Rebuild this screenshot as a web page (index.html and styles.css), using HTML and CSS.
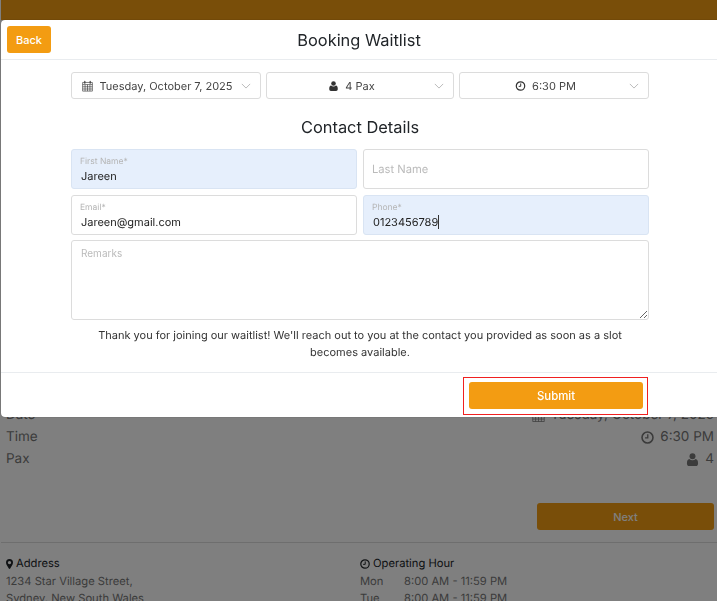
FILE: index.html
```html
<!DOCTYPE html>
<html lang="en">
<head>
  <meta charset="UTF-8">
  <title>Booking Waitlist</title>
  <link rel="stylesheet" href="styles.css">
</head>
<body>

<svg class="icon-defs" width="0" height="0">
  <symbol id="i-calendar" viewBox="0 0 14 14">
    <path fill="none" stroke="currentColor" stroke-width=".8" d="M.8 2.500h12.400v11H.8zM.8 5.200h12.400M.8 8h12.400M.8 10.800h12.400M3.900 5.200v8.300M7 5.200v8.300M10.100 5.200v8.300"/>
    <path fill="none" stroke="currentColor" stroke-width="1.400" stroke-linecap="round" d="M3.600 1v2.400M10.400 1v2.400"/>
  </symbol>
  <symbol id="i-user" viewBox="0 0 12 14">
    <circle cx="6" cy="3.600" r="3.200" fill="currentColor"/>
    <path fill="currentColor" d="M2.600 6.400c1 .9 2.100 1.300 3.400 1.300s2.400-.4 3.400-1.300c1.700.2 2.600 1.800 2.600 4.800 0 1.700-1 2.800-2.400 2.800H2.400C1 14 0 12.900 0 11.200c0-3 .9-4.600 2.600-4.800z"/>
  </symbol>
  <symbol id="i-clock" viewBox="0 0 14 14">
    <circle cx="7" cy="7" r="5.900" fill="none" stroke="currentColor" stroke-width="1.700"/>
    <path fill="none" stroke="currentColor" stroke-width="1.400" d="M7.300 3.400v4.100H4.400"/>
  </symbol>
  <symbol id="i-marker" viewBox="0 0 10 14">
    <path fill="currentColor" fill-rule="evenodd" d="M5 0a5 5 0 0 1 5 5c0 1.200-.3 1.900-.8 2.900L6 13.300c-.4.900-1.600.9-2 0L.8 7.900C.3 6.900 0 6.200 0 5a5 5 0 0 1 5-5zm0 2.600a2.400 2.400 0 1 0 0 4.800 2.400 2.400 0 0 0 0-4.800z"/>
  </symbol>
  <symbol id="i-chevron" viewBox="0 0 12 7">
    <path fill="none" stroke="currentColor" stroke-width="1.200" d="M1 1l5 5 5-5"/>
  </symbol>
</svg>

<div class="page">
  <div class="top-bar"></div>

  <div class="summary">
    <div class="summary-row">
      <span>Date</span>
      <span class="summary-value"><svg class="icon"><use href="#i-calendar"/></svg> Tuesday, October 7, 2025</span>
    </div>
    <div class="summary-row">
      <span>Time</span>
      <span class="summary-value"><svg class="icon"><use href="#i-clock"/></svg> 6:30 PM</span>
    </div>
    <div class="summary-row">
      <span>Pax</span>
      <span class="summary-value"><svg class="icon"><use href="#i-user"/></svg> 4</span>
    </div>
  </div>

  <div class="next-row">
    <button class="btn btn-next">Next</button>
  </div>

  <div class="info">
    <div class="info-col">
      <div class="info-title"><svg class="icon-sm icon-marker"><use href="#i-marker"/></svg> Address</div>
      <div>1234 Star Village Street,</div>
      <div>Sydney, New South Wales</div>
    </div>
    <div class="info-col">
      <div class="info-title"><svg class="icon-sm"><use href="#i-clock"/></svg> Operating Hour</div>
      <div class="hours"><span>Mon</span><span>8:00 AM - 11:59 PM</span></div>
      <div class="hours"><span>Tue</span><span>8:00 AM - 11:59 PM</span></div>
    </div>
  </div>
</div>

<div class="overlay">
  <div class="modal">
    <div class="modal-header">
      <button class="btn btn-back">Back</button>
      <h3>Booking Waitlist</h3>
    </div>

    <div class="modal-body">
      <div class="pickers">
        <div class="picker">
          <span class="picker-label"><svg class="icon-picker"><use href="#i-calendar"/></svg> Tuesday, October 7, 2025</span>
          <svg class="chevron"><use href="#i-chevron"/></svg>
        </div>
        <div class="picker">
          <span class="picker-label"><svg class="icon-picker icon-picker-sm"><use href="#i-user"/></svg> 4 Pax</span>
          <svg class="chevron"><use href="#i-chevron"/></svg>
        </div>
        <div class="picker">
          <span class="picker-label"><svg class="icon-picker icon-picker-sm"><use href="#i-clock"/></svg> 6:30 PM</span>
          <svg class="chevron"><use href="#i-chevron"/></svg>
        </div>
      </div>

      <h3 class="contact-title">Contact Details</h3>

      <div class="form-grid">
        <div class="field field-filled">
          <span class="field-label">First Name*</span>
          <span class="field-value">Jareen</span>
        </div>
        <div class="field field-empty">Last Name</div>
        <div class="field">
          <span class="field-label">Email*</span>
          <span class="field-value">Jareen@gmail.com</span>
        </div>
        <div class="field field-filled">
          <span class="field-label">Phone*</span>
          <span class="field-value"><span class="caret">0123456789</span></span>
        </div>
        <textarea class="remarks" placeholder="Remarks"></textarea>
      </div>

      <p class="note">Thank you for joining our waitlist! We'll reach out to you at the contact you provided as soon as a slot becomes available.</p>
    </div>

    <div class="modal-footer">
      <div class="submit-outline">
        <button class="btn btn-submit">Submit</button>
      </div>
    </div>
  </div>
</div>

</body>
</html>
```

FILE: styles.css
```css
body {
  font-family: Inter, 'Liberation Sans', sans-serif;
  margin: 0;
  padding: 0;
  background-color: #fff;
  color: #212529;
  overflow: hidden;
  text-rendering: geometricPrecision;
}

.icon-defs {
  position: absolute;
}

.btn {
  font-family: inherit;
  font-weight: 500;
  color: #fff;
  background-color: #f39c12;
  border: none;
  border-radius: 3px;
  cursor: pointer;
}

/* page behind the modal */
.page {
  height: 601px;
  overflow: hidden;
  padding-left: 1px;
  box-sizing: border-box;
  font-size: 11.2px;
}

.top-bar {
  height: 20px;
  background-color: #f39c12;
}

.summary {
  margin-top: 384px;
  padding: 0 3px 0 5px;
  font-size: 13.500px;
  color: #777;
}

.summary-row {
  display: flex;
  justify-content: space-between;
  align-items: center;
  height: 22px;
}

.summary-value {
  display: flex;
  align-items: center;
  gap: 6px;
}

.icon {
  width: 13px;
  height: 13px;
}

.icon-sm {
  width: 10px;
  height: 10px;
}

.icon-marker {
  width: 7px;
}

.next-row {
  display: flex;
  justify-content: flex-end;
  padding: 33px 3px 12px 0;
}

.btn-next {
  width: 177px;
  height: 27px;
  font-size: 11px;
}

.info {
  display: flex;
  border-top: 1px solid #ddd;
  padding: 12px 0 0 5px;
  line-height: 17px;
  color: #777;
}

.info-col {
  width: 354px;
}

.info-title {
  color: #212529;
  display: flex;
  align-items: center;
  gap: 3px;
  margin-bottom: 1px;
}

.hours {
  display: flex;
}

.hours span:first-child {
  width: 44px;
}

/* modal */
.overlay {
  position: fixed;
  top: 0;
  left: 0;
  width: 100%;
  height: 100%;
  box-sizing: border-box;
  padding: 20px 0 0 1px;
  background-color: rgba(0, 0, 0, 0.5);
}

.modal {
  background-color: #fff;
  border-radius: 4px 0 0 4px;
  box-shadow: 0 0 1px rgba(0, 0, 0, 0.6);
}

.modal-header {
  display: flex;
  align-items: center;
  justify-content: center;
  position: relative;
  height: 39px;
  border-bottom: 1px solid #e9ecef;
}

.modal-header h3 {
  margin: 0;
  font-size: 16.400px;
  font-weight: 400;
}

.btn-back {
  position: absolute;
  left: 6px;
  top: 6px;
  width: 44px;
  height: 27px;
  font-size: 11px;
}

.modal-body {
  margin: 0 68px 0 70px;
  padding: 12px 0 11px;
}

.pickers {
  display: grid;
  grid-template-columns: 190px 188px 190px;
  gap: 5px;
}

.picker {
  display: flex;
  align-items: center;
  justify-content: space-between;
  height: 27px;
  box-sizing: border-box;
  padding: 0 9px 0 8px;
  border: 1px solid #dcdcdc;
  border-radius: 3px;
  font-size: 11px;
  color: #444;
}

.picker-label {
  flex: 1;
  display: flex;
  align-items: center;
  justify-content: center;
  gap: 6px;
  color: #444;
}

.icon-picker {
  width: 11px;
  height: 12px;
  color: #333;
}

.icon-picker-sm {
  height: 10px;
}

.chevron {
  width: 10px;
  height: 6px;
  color: #bbb;
  margin-left: 6px;
}

.contact-title {
  margin: 18px 0 12px;
  font-size: 16.400px;
  font-weight: 400;
  line-height: 20px;
  text-align: center;
}

.form-grid {
  display: grid;
  grid-template-columns: 286px 286px;
  grid-template-rows: 40px 40px 80px;
  gap: 6px;
}

.field {
  display: flex;
  flex-direction: column;
  justify-content: center;
  box-sizing: border-box;
  padding: 1px 8px 0;
  border: 1px solid #dcdcdc;
  border-radius: 3px;
}

.field-filled {
  background-color: #e6effc;
  border-color: #d9e4f3;
}

.field-empty {
  padding-top: 0;
  padding-bottom: 1px;
  font-size: 11.200px;
  color: #bbb;
}

.field-label {
  font-size: 8.500px;
  line-height: 12px;
  color: #b5b5b5;
}

.field-value {
  font-size: 11px;
  line-height: 16px;
  padding-left: 1px;
  color: #222;
}

.caret {
  border-right: 1px solid #333;
}

.remarks {
  grid-column: 1 / 3;
  height: 80px;
  margin-top: -1px;
  box-sizing: border-box;
  padding: 6px 9px;
  border: 1px solid #dcdcdc;
  border-radius: 3px;
  font-family: inherit;
  font-size: 10px;
  outline: none;
}

.remarks::placeholder {
  color: #bbb;
}

.note {
  margin: 6px 0 0;
  padding: 0 22px;
  font-size: 11px;
  line-height: 17px;
  text-align: center;
  color: #333;
}

.modal-footer {
  display: flex;
  justify-content: flex-end;
  height: 45px;
  box-sizing: border-box;
  padding: 4px 69px 0 0;
  border-top: 1px solid #e9ecef;
}

.submit-outline {
  width: 185px;
  height: 38px;
  box-sizing: border-box;
  padding: 4px 4px 0 5px;
  border: 1px solid #f02020;
}

.btn-submit {
  width: 174px;
  height: 27px;
  font-size: 11.400px;
}
```
